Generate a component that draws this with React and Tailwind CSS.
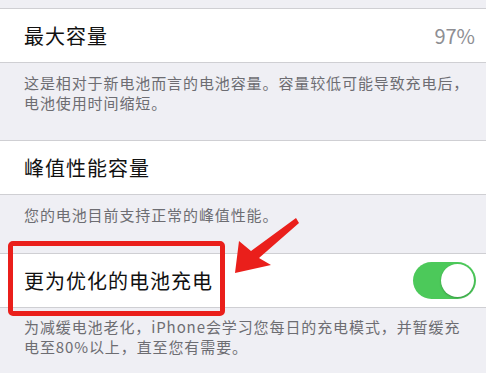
export default function App() {
  const font = { fontFamily: '"Noto Sans CJK SC", "Noto Sans", sans-serif' };
  return (
    <div className="relative h-[373px] w-[486px] overflow-hidden bg-[#efeff4]" style={font}>
      <div className="h-[8px]" />
      <div className="flex h-[55px] items-center justify-between border-y border-[#cfcfd3] bg-white pl-[24px] pr-[11px]">
        <span className="text-[20px] leading-none tracking-[1px] text-[#111]">最大容量</span>
        <span className="text-[20px] leading-none text-[#8e8e93]">97%</span>
      </div>
      <div className="h-[77px] pl-[24px] pt-[10px] text-[15px] leading-[20px] tracking-[0.9px] text-[#6d6d72]">
        这是相对于新电池而言的电池容量。容量较低可能导致充电后，
        <br />
        电池使用时间缩短。
      </div>
      <div className="flex h-[55px] items-center border-y border-[#cfcfd3] bg-white pl-[24px]">
        <span className="text-[20px] leading-none tracking-[1px] text-[#111]">峰值性能容量</span>
      </div>
      <div className="h-[58px] pl-[24px] pt-[10px] text-[15px] leading-[20px] tracking-[0.9px] text-[#6d6d72]">
        您的电池目前支持正常的峰值性能。
      </div>
      <div className="flex h-[55px] items-center justify-between border-y border-[#cfcfd3] bg-white pl-[24px] pr-[10px]">
        <span className="text-[20px] leading-none tracking-[1px] text-[#111]">更为优化的电池充电</span>
        <div className="flex h-[37px] w-[63px] items-center justify-end rounded-full bg-[#4cc95a] p-[2px]">
          <div className="h-[33px] w-[33px] rounded-full bg-white shadow-[0_1px_2px_rgba(0,0,0,0.25)]" />
        </div>
      </div>
      <div className="pl-[24px] pt-[9px] text-[15px] leading-[20px] tracking-[0.9px] text-[#6d6d72]">
        为减缓电池老化，iPhone会学习您每日的充电模式，并暂缓充
        <br />
        电至80%以上，直至您有需要。
      </div>

      <div className="absolute left-[8px] top-[241px] h-[75px] w-[217px] rounded-[5px] border-[5px] border-[#ea1f1b]" />
      <svg className="absolute left-0 top-0" width="486" height="373" viewBox="0 0 486 373">
        <polygon
          points="235,273 239,241 251,251 296,218 299,223 259,258 271,265"
          fill="#ea1f1b"
        />
      </svg>
    </div>
  );
}
